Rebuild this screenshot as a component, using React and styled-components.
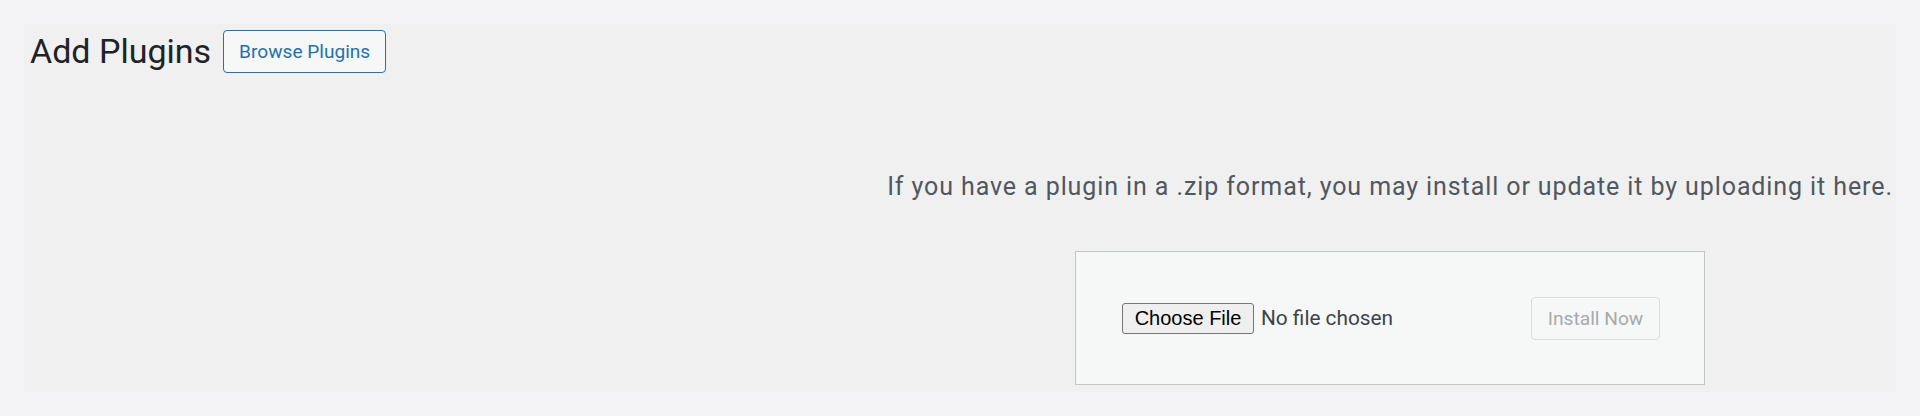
import React from 'react';
import styled, {createGlobalStyle} from 'styled-components';

const GlobalStyle = createGlobalStyle`
  html, body {
    margin: 0;
    padding: 0;
    background: #f4f4f6;
  }

  body {
    font-family: Roboto, "Noto Sans", sans-serif;
    color: #3c434a;
  }
`;

const Page = styled.div`
  box-sizing: border-box;
  height: 416px;
  padding: 24px;
`;

const Panel = styled.main`
  background: #f0f0f0;
  display: flex;
  flex-direction: column;
  height: 368px;
  padding: 6px 0 0 6px;
  box-sizing: border-box;
`;

const Header = styled.div`
  align-items: center;
  display: flex;
  gap: 12px;
  height: 43px;
`;

const Title = styled.h1`
  color: #1d2327;
  font-size: 34px;
  font-weight: 400;
  line-height: 43px;
  margin: 0;
`;

const ActionButton = styled.a`
  align-items: center;
  background: #f6f7f7;
  border: 1.5px solid #2271b1;
  border-radius: 4px;
  box-sizing: border-box;
  color: #2271b1;
  display: inline-flex;
  font-size: 19.1px;
  height: 43px;
  padding: 0 15px;
  text-decoration: none;
`;

const UploadSection = styled.section`
  align-items: center;
  display: flex;
  flex-direction: column;
  margin: 97px 0 0 auto;
  width: 1012px;
`;

const Help = styled.p`
  color: #50575e;
  font-size: 25px;
  letter-spacing: 0.9px;
  line-height: 34px;
  margin: 0 0 47px;
  text-align: center;
  white-space: nowrap;
`;

const UploadForm = styled.form`
  align-items: center;
  background: #f6f7f7;
  border: 1.5px solid #c3c4c7;
  box-sizing: border-box;
  display: flex;
  height: 134px;
  justify-content: space-between;
  padding: 0 44px 0 46px;
  width: 630px;
`;

const FilePicker = styled.label`
  align-items: center;
  display: flex;
  gap: 7px;
`;

const HiddenInput = styled.input`
  display: none;
`;

const FileButton = styled.span`
  align-items: center;
  background: #efefef;
  border: 1.5px solid #767676;
  border-radius: 3px;
  box-sizing: border-box;
  color: #000;
  display: inline-flex;
  font-family: "Liberation Sans", Arial, sans-serif;
  font-size: 20px;
  height: 31px;
  justify-content: center;
  width: 132px;
`;

const FileName = styled.span`
  color: #3c434a;
  font-size: 20.8px;
`;

const SubmitButton = styled.button`
  background: #f6f7f7;
  border: 1.5px solid #dcdcde;
  border-radius: 4px;
  box-sizing: border-box;
  color: #a7aaad;
  font-family: Roboto, "Noto Sans", sans-serif;
  font-size: 19.2px;
  height: 43px;
  padding: 0;
  width: 129px;
`;

const App = () => {
  return (
    <>
      <GlobalStyle />
      <Page>
        <Panel>
          <Header>
            <Title>Add Plugins</Title>
            <ActionButton href="#">Browse Plugins</ActionButton>
          </Header>
          <UploadSection>
            <Help>If you have a plugin in a .zip format, you may install or update it by uploading it here.</Help>
            <UploadForm onSubmit={e => e.preventDefault()}>
              <FilePicker>
                <HiddenInput type="file" accept=".zip" />
                <FileButton>Choose File</FileButton>
                <FileName>No file chosen</FileName>
              </FilePicker>
              <SubmitButton type="submit" disabled>
                Install Now
              </SubmitButton>
            </UploadForm>
          </UploadSection>
        </Panel>
      </Page>
    </>
  );
};

export default App;
